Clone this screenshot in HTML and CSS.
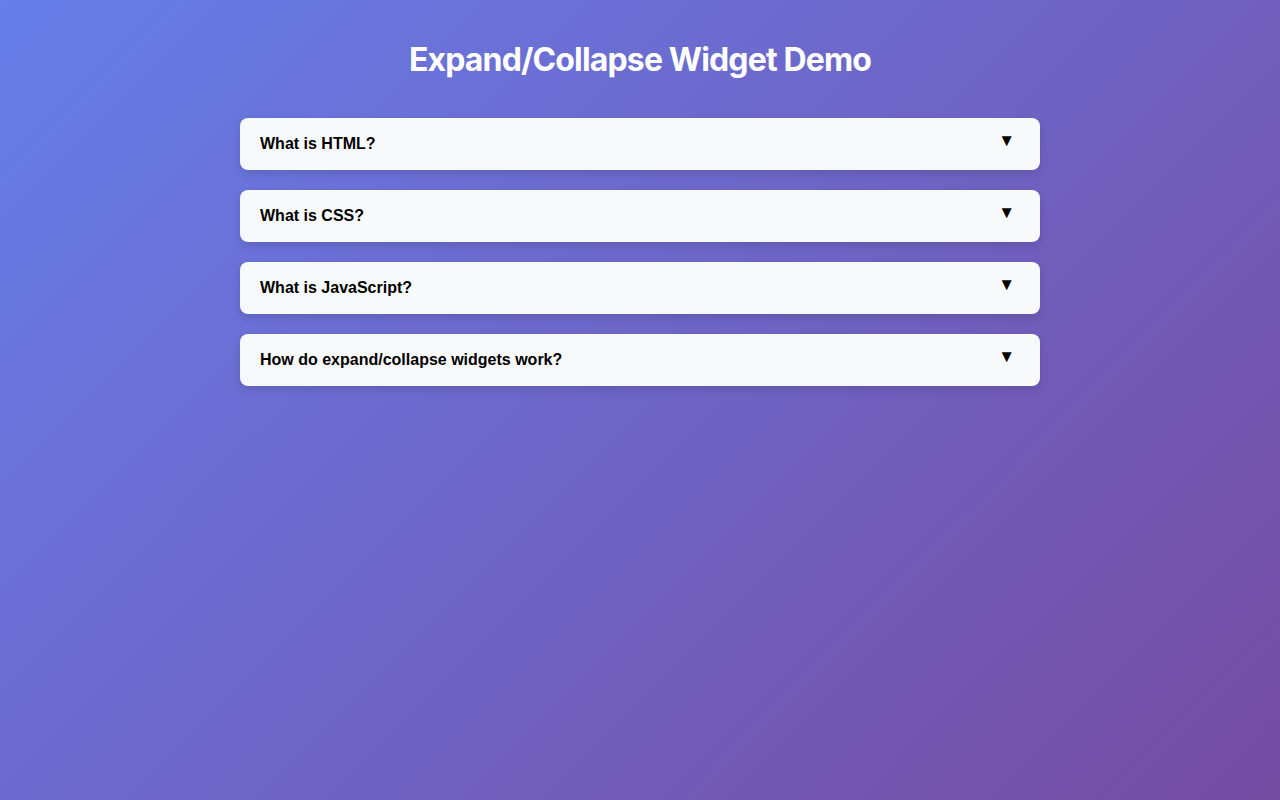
FILE: index.html
```html
<!DOCTYPE html>
<html lang="en">
<head>
<meta charset="utf-8">
<title>Expand/Collapse Widget Demo</title>
<link rel="stylesheet" href="styles.css">
</head>
<body>
<div class="container">
  <h1 class="title">Expand/Collapse Widget Demo</h1>
  <div class="list">
    <div class="item"><span class="q">What is HTML?</span><span class="arrow">▼</span></div>
    <div class="item"><span class="q">What is CSS?</span><span class="arrow">▼</span></div>
    <div class="item"><span class="q">What is JavaScript?</span><span class="arrow">▼</span></div>
    <div class="item"><span class="q">How do expand/collapse widgets work?</span><span class="arrow">▼</span></div>
  </div>
</div>
</body>
</html>
```

FILE: styles.css
```css
html, body {
  margin: 0;
  padding: 0;
  height: 100%;
}
body {
  background: linear-gradient(135deg, #667eea 0%, #764ba2 100%);
  font-family: "Liberation Sans", Arial, sans-serif;
  min-height: 800px;
}
.container {
  width: 800px;
  margin: 0 auto;
  padding-top: 41px;
}
.title {
  font-family: Inter, "Liberation Sans", sans-serif;
  font-weight: 700;
  font-size: 32px;
  line-height: 38px;
  letter-spacing: -0.85px;
  color: #ffffff;
  text-align: center;
  margin: 0 0 39px 0;
}
.list {
  display: flex;
  flex-direction: column;
  gap: 20px;
}
.item {
  background: #f8f9fa;
  border-radius: 8px;
  box-shadow: 0 4px 8px rgba(0, 0, 0, 0.12);
  height: 52px;
  box-sizing: border-box;
  padding: 0 25px 0 20px;
  display: flex;
  align-items: center;
  justify-content: space-between;
}
.q {
  font-weight: 700;
  font-size: 16px;
  color: #000;
}
.arrow {
  font-size: 17px;
  color: #000;
  font-family: "Liberation Sans", Arial, sans-serif;
  position: relative;
  top: -3px;
}
```
